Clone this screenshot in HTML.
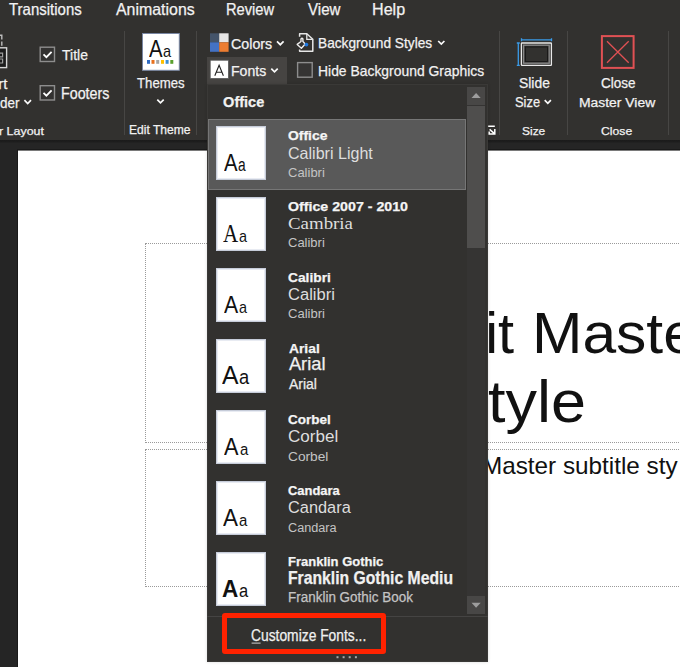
<!DOCTYPE html>
<html><head><meta charset="utf-8">
<style>
html,body{margin:0;padding:0;}
body{width:680px;height:667px;overflow:hidden;position:relative;background:#32312f;font-family:"Liberation Sans",sans-serif;}
.t{position:absolute;white-space:nowrap;line-height:1;transform-origin:0 0;}
.st .t{-webkit-text-stroke:0.25px currentColor;}
.abs{position:absolute;}
.sep{position:absolute;width:1px;background:#474644;top:31px;height:104px;}
.chev{position:absolute;}
.thumb{position:absolute;left:216px;width:48px;height:52px;background:#fff;border:1px solid #c6ccd9;box-shadow:inset 0 0 0 1px #e8ebf2;}
</style></head><body>
<!-- slide area -->
<div class="abs" style="left:0;top:140px;width:680px;height:527px;background:#252525;"></div>
<div class="abs" style="left:0;top:140px;width:680px;height:3px;background:linear-gradient(#1b1b1b,#1d1d1d 60%,#242424);"></div>
<div class="abs" style="left:17px;top:149px;width:663px;height:518px;background:#1a1a1a;"></div>
<div class="abs" style="left:18px;top:150px;width:662px;height:517px;background:#fff;border-top:1px solid #7a7a7a;box-sizing:border-box;"></div>
<div class="abs" style="left:145px;top:243px;width:600px;height:198px;border:1px dotted #9a9a9a;"></div>
<div class="abs" style="left:145px;top:449px;width:600px;height:136px;border:1px dotted #9a9a9a;"></div>
<div class="t" style="left:485.31px;top:305.00px;font-size:57.70px;color:#111;font-weight:400;font-family:'Liberation Sans', sans-serif;">it</div>
<div class="t" style="left:531.66px;top:305.00px;font-size:57.70px;color:#111;font-weight:400;font-family:'Liberation Sans', sans-serif;transform:scaleX(1.0494);">Master</div>
<div class="t" style="left:488.36px;top:372.00px;font-size:59.50px;color:#111;font-weight:400;font-family:'Liberation Sans', sans-serif;transform:scaleX(1.0579);">tyle</div>
<div class="t" style="left:482.01px;top:454.00px;font-size:24.00px;color:#111;font-weight:400;font-family:'Liberation Sans', sans-serif;transform:scaleX(1.0115);">Master subtitle sty</div>
<!-- ribbon separators -->
<div class="sep" style="left:124px"></div>
<div class="sep" style="left:196px"></div>
<div class="sep" style="left:499px"></div>
<div class="sep" style="left:567px"></div>
<div class="sep" style="left:668px"></div>

<svg class="abs" style="left:0;top:0" width="680" height="145" viewBox="0 0 680 145">
 <rect x="207" y="57" width="80" height="27" fill="#464442"/>
 <!-- left partial icon -->
 <path d="M0,35.3 H1.8 V39.5 M1.8,41.5 V45.8" stroke="#bdbdbd" stroke-width="1.4" fill="none"/>
 <rect x="-10" y="47.8" width="16.6" height="19.8" fill="#1c1c1c" stroke="#d6d6d6" stroke-width="1.4"/>
 <path d="M-3,53.2 H2.6 V56.8 H-3 M-3,59 H2.6 V63 H-3" stroke="#9c9c9c" stroke-width="1.2" fill="none"/>
 <!-- checkboxes -->
 <rect x="40.2" y="47.2" width="14.3" height="14.3" fill="#333231" stroke="#8d8d8d" stroke-width="1.4"/>
 <path d="M43.5,54.3 L46.4,57.2 L51.6,51.8" stroke="#fff" stroke-width="1.8" fill="none"/>
 <rect x="40.2" y="85.7" width="14.3" height="14.3" fill="#333231" stroke="#8d8d8d" stroke-width="1.4"/>
 <path d="M43.5,92.8 L46.4,95.7 L51.6,90.3" stroke="#fff" stroke-width="1.8" fill="none"/>
 <!-- chevrons -->
 <path d="M24.4,100.2 L27.7,103.5 L31,100.2" stroke="#fafafa" stroke-width="1.7" fill="none"/>
 <path d="M157.3,99.6 L160.5,102.8 L163.7,99.6" stroke="#fafafa" stroke-width="1.7" fill="none"/>
 <path d="M277,41.4 L280.3,44.7 L283.6,41.4" stroke="#fafafa" stroke-width="1.7" fill="none"/>
 <path d="M271.3,68.6 L274.5,71.8 L277.7,68.6" stroke="#fafafa" stroke-width="1.7" fill="none"/>
 <path d="M438.2,41 L441.3,44.1 L444.4,41" stroke="#fafafa" stroke-width="1.7" fill="none"/>
 <path d="M544.7,100.2 L547.8,103.3 L550.9,100.2" stroke="#fafafa" stroke-width="1.7" fill="none"/>
 <!-- themes icon -->
 <rect x="142.5" y="33.5" width="36.8" height="36.8" fill="#fff" stroke="#7a87a3" stroke-width="1"/>
 <g fill="#2e6bc4"><rect x="147" y="60" width="3" height="3.8"/></g>
 <rect x="151.5" y="60" width="3" height="3.8" fill="#e8711d"/>
 <rect x="156.2" y="60" width="3" height="3.8" fill="#a5a5a5"/>
 <rect x="161" y="60" width="3" height="3.8" fill="#ffc000"/>
 <rect x="165.6" y="60" width="3" height="3.8" fill="#3b8fd6"/>
 <rect x="170.3" y="60" width="3" height="3.8" fill="#5aa02c"/>
 <!-- colors icon -->
 <rect x="210" y="33.3" width="9.2" height="9" fill="#44546a"/>
 <rect x="219.2" y="33.3" width="9.4" height="9" fill="#e7e6e6"/>
 <rect x="210" y="42.3" width="9.2" height="9.5" fill="#4472c4"/>
 <rect x="219.2" y="42.3" width="9.4" height="9.5" fill="#ed7d31"/>
 <!-- fonts highlight -->
 <rect x="210.2" y="60.2" width="18.3" height="18.3" fill="#fff" stroke="#555" stroke-width="0.8"/>
 <path d="M214.8,75.8 L219.1,65.3 L223.4,75.8 M216.3,72.3 H222" stroke="#222" stroke-width="1.1" fill="none"/>
 <!-- background styles icon -->
 <path d="M299.6,36.8 V33.8 H306.8 L312.8,39.3 V51.2 H299.6 V49.4" stroke="#e6e6e6" stroke-width="1.5" fill="none" stroke-linejoin="round"/>
 <path d="M306.8,33.8 V39.3 H312.8" stroke="#e6e6e6" stroke-width="1.3" fill="none"/>
 <path d="M297.2,44.4 L301.4,48.2 L305.2,44 L302.9,41.6 V39 Q302,37.6 301,39 V41.5 Z" stroke="#ededed" stroke-width="1.4" fill="#32312f" stroke-linejoin="round"/>
 <circle cx="306.4" cy="44.6" r="1.9" fill="#1e78e0"/>
 <!-- hide bg checkbox -->
 <rect x="297.6" y="62.6" width="14.6" height="14.6" fill="#353433" stroke="#8d8d8d" stroke-width="1.4"/>
 <!-- slide size icon -->
 <path d="M521.5,39.8 H551.5 M521.5,38.3 V41.3 M551.5,38.3 V41.3" stroke="#3a9be8" stroke-width="1.3" fill="none"/>
 <path d="M518.3,43 V65.3 M516.8,43 H519.8 M516.8,65.3 H519.8" stroke="#3a9be8" stroke-width="1.3" fill="none"/>
 <rect x="521.4" y="43" width="30" height="22.4" fill="none" stroke="#e8e8e8" stroke-width="1.3" rx="0.6"/>
 <rect x="523.6" y="45.2" width="25.6" height="18" fill="none" stroke="#8a8a8a" stroke-width="1.3"/>
 <rect x="525.4" y="47" width="22" height="14.4" fill="#32312f" stroke="#151515" stroke-width="0.8"/>
 <!-- close icon -->
 <rect x="601.9" y="36.1" width="31.7" height="31.8" fill="none" stroke="#e05154" stroke-width="2"/>
 <path d="M607,41.2 L628.7,62.7 M628.7,41.2 L607,62.7" stroke="#e05154" stroke-width="1.3"/>
</svg>

<div class="t" style="left:149.30px;top:38.00px;font-size:23.69px;color:#111;font-weight:400;font-family:'Liberation Sans', sans-serif;transform:scaleX(0.8570);">A</div>
<div class="t" style="left:162.92px;top:43.00px;font-size:16.20px;color:#111;font-weight:400;font-family:'Liberation Sans', sans-serif;transform:scaleX(0.8990);">a</div>
<div class="st"><div class="t" style="left:8.70px;top:1.00px;font-size:16.28px;color:#f2f2f2;font-weight:400;font-family:'Liberation Sans', sans-serif;transform:scaleX(0.9214);">Transitions</div>
<div class="t" style="left:115.92px;top:1.00px;font-size:16.28px;color:#f2f2f2;font-weight:400;font-family:'Liberation Sans', sans-serif;transform:scaleX(0.9781);">Animations</div>
<div class="t" style="left:226.22px;top:1.00px;font-size:16.28px;color:#f2f2f2;font-weight:400;font-family:'Liberation Sans', sans-serif;transform:scaleX(0.9022);">Review</div>
<div class="t" style="left:307.52px;top:1.00px;font-size:16.28px;color:#f2f2f2;font-weight:400;font-family:'Liberation Sans', sans-serif;transform:scaleX(0.9279);">View</div>
<div class="t" style="left:372.21px;top:1.00px;font-size:16.28px;color:#f2f2f2;font-weight:400;font-family:'Liberation Sans', sans-serif;transform:scaleX(0.9905);">Help</div>
<div class="t" style="left:61.72px;top:48.00px;font-size:14.53px;color:#f2f2f2;font-weight:400;font-family:'Liberation Sans', sans-serif;transform:scaleX(0.9636);">Title</div>
<div class="t" style="left:60.86px;top:86.00px;font-size:15.63px;color:#f2f2f2;font-weight:400;font-family:'Liberation Sans', sans-serif;transform:scaleX(0.9136);">Footers</div>
<div class="t" style="left:-1.82px;top:76.00px;font-size:15.00px;color:#f2f2f2;font-weight:400;font-family:'Liberation Sans', sans-serif;">rt</div>
<div class="t" style="left:-0.03px;top:95.00px;font-size:15.30px;color:#f2f2f2;font-weight:400;font-family:'Liberation Sans', sans-serif;transform:scaleX(0.8807);">der</div>
<div class="t" style="left:-0.81px;top:126.00px;font-size:11.05px;color:#f2f2f2;font-weight:400;font-family:'Liberation Sans', sans-serif;transform:scaleX(1.1252);">r Layout</div>
<div class="t" style="left:136.74px;top:75.00px;font-size:15.26px;color:#f2f2f2;font-weight:400;font-family:'Liberation Sans', sans-serif;transform:scaleX(0.8663);">Themes</div>
<div class="t" style="left:129.03px;top:124.00px;font-size:12.35px;color:#f2f2f2;font-weight:400;font-family:'Liberation Sans', sans-serif;transform:scaleX(0.9772);">Edit Theme</div>
<div class="t" style="left:231.29px;top:37.00px;font-size:14.97px;color:#f2f2f2;font-weight:400;font-family:'Liberation Sans', sans-serif;transform:scaleX(0.9525);">Colors</div>
<div class="t" style="left:231.27px;top:64.00px;font-size:14.97px;color:#f2f2f2;font-weight:400;font-family:'Liberation Sans', sans-serif;transform:scaleX(0.9410);">Fonts</div>
<div class="t" style="left:318.30px;top:36.00px;font-size:14.97px;color:#f2f2f2;font-weight:400;font-family:'Liberation Sans', sans-serif;transform:scaleX(0.9144);">Background Styles</div>
<div class="t" style="left:318.29px;top:63.00px;font-size:15.55px;color:#f2f2f2;font-weight:400;font-family:'Liberation Sans', sans-serif;transform:scaleX(0.8943);">Hide Background Graphics</div>
<div class="t" style="left:518.67px;top:76.00px;font-size:14.53px;color:#f2f2f2;font-weight:400;font-family:'Liberation Sans', sans-serif;transform:scaleX(0.9571);">Slide</div>
<div class="t" style="left:515.12px;top:95.00px;font-size:14.24px;color:#f2f2f2;font-weight:400;font-family:'Liberation Sans', sans-serif;transform:scaleX(0.9045);">Size</div>
<div class="t" style="left:521.76px;top:125.00px;font-size:11.77px;color:#f2f2f2;font-weight:400;font-family:'Liberation Sans', sans-serif;transform:scaleX(1.0165);">Size</div>
<div class="t" style="left:600.82px;top:76.00px;font-size:14.24px;color:#f2f2f2;font-weight:400;font-family:'Liberation Sans', sans-serif;transform:scaleX(0.9503);">Close</div>
<div class="t" style="left:579.29px;top:96.00px;font-size:13.08px;color:#f2f2f2;font-weight:400;font-family:'Liberation Sans', sans-serif;transform:scaleX(1.0622);">Master View</div>
<div class="t" style="left:601.39px;top:125.00px;font-size:11.77px;color:#f2f2f2;font-weight:400;font-family:'Liberation Sans', sans-serif;transform:scaleX(1.0358);">Close</div></div>
<!-- menu -->
<div class="abs" style="left:207px;top:84px;width:279px;height:576px;background:#32312f;border:1px solid #3a3937;box-shadow:0 0 3px rgba(0,0,0,0.15);"></div>
<div class="abs" style="left:207px;top:84px;width:280px;height:20px;"></div>
<div class="abs" style="left:208px;top:119px;width:256px;height:69px;background:#595959;border:1px solid #767676;"></div>
<div class="abs" style="left:467px;top:87px;width:18px;height:527px;background:#353433;"></div>
<div class="abs" style="left:467px;top:87px;width:18px;height:18px;background:#484746;"></div>
<div class="abs" style="left:467px;top:106px;width:18px;height:142px;background:#4f4e4d;"></div>
<div class="abs" style="left:467px;top:596px;width:18px;height:18px;background:#484746;"></div>
<div class="abs" style="left:207px;top:616px;width:281px;height:1px;background:#454443;"></div>
<div class="thumb" style="top:126px"></div>
<div class="t" style="left:223.90px;top:152.00px;font-size:23.26px;color:#111;font-weight:400;font-family:'Liberation Sans', sans-serif;transform:scaleX(0.8730);">A</div>
<div class="t" style="left:238.35px;top:156.00px;font-size:18.89px;color:#111;font-weight:400;font-family:'Liberation Sans', sans-serif;transform:scaleX(0.7299);">a</div>
<div class="thumb" style="top:197px"></div>
<div class="t" style="left:223.19px;top:221.00px;font-size:25.53px;color:#111;font-weight:400;font-family:'Liberation Serif', serif;transform:scaleX(0.8223);">A</div>
<div class="t" style="left:239.13px;top:228.00px;font-size:17.41px;color:#111;font-weight:400;font-family:'Liberation Sans', sans-serif;transform:scaleX(0.8254);">a</div>
<div class="thumb" style="top:268px"></div>
<div class="t" style="left:223.79px;top:294.00px;font-size:23.11px;color:#111;font-weight:400;font-family:'Liberation Sans', sans-serif;transform:scaleX(0.9179);">A</div>
<div class="t" style="left:239.13px;top:299.00px;font-size:17.41px;color:#111;font-weight:400;font-family:'Liberation Sans', sans-serif;transform:scaleX(0.8254);">a</div>
<div class="thumb" style="top:339px"></div>
<div class="t" style="left:222.28px;top:363.00px;font-size:25.87px;color:#111;font-weight:400;font-family:'Liberation Sans', sans-serif;transform:scaleX(0.9546);">A</div>
<div class="t" style="left:239.47px;top:366.00px;font-size:21.11px;color:#111;font-weight:400;font-family:'Liberation Sans', sans-serif;transform:scaleX(0.8646);">a</div>
<div class="thumb" style="top:410px"></div>
<div class="t" style="left:223.69px;top:436.00px;font-size:23.11px;color:#111;font-weight:400;font-family:'Liberation Sans', sans-serif;transform:scaleX(0.9375);">A</div>
<div class="t" style="left:239.90px;top:442.00px;font-size:16.67px;color:#111;font-weight:400;font-family:'Liberation Sans', sans-serif;transform:scaleX(0.8971);">a</div>
<div class="thumb" style="top:481px"></div>
<div class="t" style="left:223.19px;top:507.00px;font-size:23.11px;color:#111;font-weight:400;font-family:'Liberation Sans', sans-serif;transform:scaleX(0.9703);">A</div>
<div class="t" style="left:239.10px;top:513.00px;font-size:16.67px;color:#111;font-weight:400;font-family:'Liberation Sans', sans-serif;transform:scaleX(0.8971);">a</div>
<div class="thumb" style="top:552px"></div>
<div class="t" style="left:222.44px;top:577.00px;font-size:24.13px;color:#111;font-weight:700;font-family:'Liberation Sans', sans-serif;transform:scaleX(0.9341);">A</div>
<div class="t" style="left:238.74px;top:582.00px;font-size:18.15px;color:#111;font-weight:400;font-family:'Liberation Sans', sans-serif;transform:scaleX(0.9095);">a</div>
<div class="st"><div class="t" style="left:223.12px;top:95.00px;font-size:14.53px;color:#f2f2f2;font-weight:700;font-family:'Liberation Sans', sans-serif;">Office</div>
<div class="t" style="left:288.44px;top:130.00px;font-size:12.94px;color:#f5f5f5;font-weight:700;font-family:'Liberation Sans', sans-serif;transform:scaleX(1.0755);">Office</div>
<div class="t" style="left:288.20px;top:146.00px;font-size:16.72px;color:#dedede;font-weight:400;font-family:'Liberation Sans', sans-serif;transform:scaleX(0.9618);-webkit-text-stroke:0;">Calibri Light</div>
<div class="t" style="left:288.35px;top:167.00px;font-size:12.79px;color:#c4c4c4;font-weight:400;font-family:'Liberation Sans', sans-serif;transform:scaleX(1.0165);-webkit-text-stroke:0;">Calibri</div>
<div class="t" style="left:288.43px;top:200.00px;font-size:13.37px;color:#f5f5f5;font-weight:700;font-family:'Liberation Sans', sans-serif;transform:scaleX(1.0632);">Office 2007 - 2010</div>
<div class="t" style="left:288.24px;top:215.00px;font-size:17.07px;color:#dedede;font-weight:400;font-family:'Liberation Serif', serif;transform:scaleX(1.1060);-webkit-text-stroke:0;">Cambria</div>
<div class="t" style="left:288.35px;top:238.00px;font-size:11.92px;color:#c4c4c4;font-weight:400;font-family:'Liberation Sans', sans-serif;transform:scaleX(1.0909);-webkit-text-stroke:0;">Calibri</div>
<div class="t" style="left:288.45px;top:271.00px;font-size:13.08px;color:#f5f5f5;font-weight:700;font-family:'Liberation Sans', sans-serif;transform:scaleX(1.0524);">Calibri</div>
<div class="t" style="left:288.17px;top:286.00px;font-size:16.42px;color:#dedede;font-weight:400;font-family:'Liberation Sans', sans-serif;transform:scaleX(1.0091);-webkit-text-stroke:0;">Calibri</div>
<div class="t" style="left:288.35px;top:308.00px;font-size:12.06px;color:#c4c4c4;font-weight:400;font-family:'Liberation Sans', sans-serif;transform:scaleX(1.0838);-webkit-text-stroke:0;">Calibri</div>
<div class="t" style="left:288.65px;top:342.00px;font-size:13.08px;color:#f5f5f5;font-weight:700;font-family:'Liberation Sans', sans-serif;transform:scaleX(1.0576);">Arial</div>
<div class="t" style="left:288.91px;top:355.00px;font-size:18.31px;color:#f0f0f0;font-weight:400;font-family:'Liberation Sans', sans-serif;">Arial</div>
<div class="t" style="left:288.93px;top:377.00px;font-size:14.24px;color:#ececec;font-weight:400;font-family:'Liberation Sans', sans-serif;transform:scaleX(0.9821);">Arial</div>
<div class="t" style="left:288.46px;top:413.00px;font-size:13.08px;color:#f5f5f5;font-weight:700;font-family:'Liberation Sans', sans-serif;transform:scaleX(1.0334);">Corbel</div>
<div class="t" style="left:288.15px;top:429.00px;font-size:16.57px;color:#dedede;font-weight:400;font-family:'Liberation Sans', sans-serif;transform:scaleX(1.0300);-webkit-text-stroke:0;">Corbel</div>
<div class="t" style="left:288.31px;top:451.00px;font-size:12.79px;color:#c4c4c4;font-weight:400;font-family:'Liberation Sans', sans-serif;transform:scaleX(1.0719);-webkit-text-stroke:0;">Corbel</div>
<div class="t" style="left:288.48px;top:485.00px;font-size:12.21px;color:#f5f5f5;font-weight:700;font-family:'Liberation Sans', sans-serif;transform:scaleX(1.0604);">Candara</div>
<div class="t" style="left:288.18px;top:500.00px;font-size:16.86px;color:#dedede;font-weight:400;font-family:'Liberation Sans', sans-serif;transform:scaleX(0.9700);-webkit-text-stroke:0;">Candara</div>
<div class="t" style="left:288.37px;top:521.00px;font-size:13.08px;color:#c4c4c4;font-weight:400;font-family:'Liberation Sans', sans-serif;transform:scaleX(0.9694);-webkit-text-stroke:0;">Candara</div>
<div class="t" style="left:288.15px;top:555.00px;font-size:13.37px;color:#f5f5f5;font-weight:700;font-family:'Liberation Sans', sans-serif;transform:scaleX(0.9730);">Franklin Gothic</div>
<div class="t" style="left:287.98px;top:569.00px;font-size:18.02px;color:#f0f0f0;font-weight:700;font-family:'Liberation Sans', sans-serif;transform:scaleX(0.8721);">Franklin Gothic Mediu</div>
<div class="t" style="left:287.92px;top:590.00px;font-size:14.24px;color:#c4c4c4;font-weight:400;font-family:'Liberation Sans', sans-serif;transform:scaleX(0.9455);">Franklin Gothic Book</div>
<div class="t" style="left:250.81px;top:627.00px;font-size:16.13px;color:#f0f0f0;font-weight:400;font-family:'Liberation Sans', sans-serif;transform:scaleX(0.8584);">Customize Fonts...</div></div>
<div class="abs" style="left:222px;top:613px;width:154px;height:31px;border:5px solid #ff2200;border-radius:3px;"></div>
<svg class="abs" style="left:0;top:0" width="680" height="667" viewBox="0 0 680 667">
 <path d="M471.5,98 L476.1,92.9 L480.7,98 Z" fill="#9d9d9d"/>
 <path d="M471.5,602.8 L476.1,607.8 L480.7,602.8 Z" fill="#9d9d9d"/>
 <path d="M488.2,126.3 H494.8 M489.6,129.4 L494.2,133.4 M494.8,129 V134 H489.2 V131.5" stroke="#fff" stroke-width="1.5" fill="none"/>
 <rect x="336.5" y="656.2" width="2" height="2" fill="#a8a8a8"/>
 <rect x="342.6" y="656.2" width="2" height="2" fill="#a8a8a8"/>
 <rect x="348.7" y="656.2" width="2" height="2" fill="#a8a8a8"/>
 <rect x="354.9" y="656.2" width="2" height="2" fill="#a8a8a8"/>
 <rect x="251.6" y="642.6" width="9" height="1" fill="#d0d0d0"/>
</svg>

</body></html>
